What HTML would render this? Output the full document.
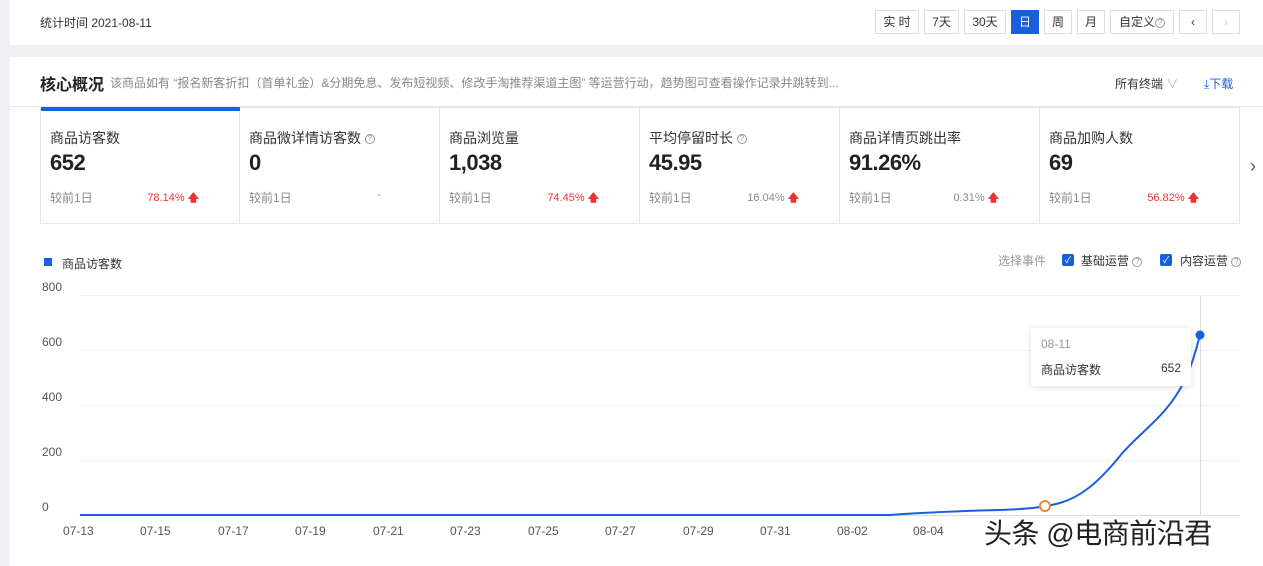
<!DOCTYPE html><html><head><meta charset="utf-8"><style>
*{margin:0;padding:0;box-sizing:border-box}
body{width:1263px;height:566px;background:#eef0f3;position:relative;overflow:hidden;font-family:"Liberation Sans","Noto Sans CJK SC",sans-serif;color:#333}
.a{position:absolute;white-space:nowrap}
.btn{position:absolute;top:10px;height:24px;border:1px solid #dcdfe4;background:#fff;font-size:12px;color:#333;text-align:center;line-height:22px}
.cell{position:absolute;top:107px;width:200px;height:117px;border:1px solid #e3e6ea;border-left:none;background:#fff}
.cell .t{position:absolute;left:9px;top:20px;font-size:14px;color:#333}
.cell .v{position:absolute;left:9px;top:42px;font-size:22px;font-weight:bold;color:#222;letter-spacing:-0.5px}
.cell .c{position:absolute;left:9px;top:81px;font-size:12px;color:#888}
.cell .p{position:absolute;right:40px;top:81px;font-size:11px;color:#e33}
.cell .g{color:#888}
.q{display:inline-block;width:10px;height:10px;border:1px solid #999;border-radius:50%;font-size:8px;line-height:8px;text-align:center;color:#999;vertical-align:middle}
.yl{position:absolute;left:42px;font-size:12px;color:#555}
.xl{position:absolute;top:524px;font-size:12px;color:#555}
</style></head><body>
<div class="a" style="left:10px;top:0;width:1253px;height:45px;background:#fff"></div>
<div class="a" style="left:40px;top:14px;font-size:12px;color:#333">统计时间 2021-08-11</div>
<div class="btn" style="left:875px;width:44px">实 时</div>
<div class="btn" style="left:924px;width:35px">7天</div>
<div class="btn" style="left:964px;width:42px">30天</div>
<div class="btn" style="left:1011px;width:28px;background:#1a5ee0;border-color:#1a5ee0;color:#fff">日</div>
<div class="btn" style="left:1044px;width:28px">周</div>
<div class="btn" style="left:1077px;width:28px">月</div>
<div class="btn" style="left:1110px;width:64px">自定义<span class="q">?</span></div>
<div class="btn" style="left:1179px;width:28px">‹</div>
<div class="btn" style="left:1212px;width:28px;color:#ccc">›</div>
<div class="a" style="left:10px;top:57px;width:1253px;height:509px;background:#fff"></div>
<div class="a" style="left:40px;top:71px;font-size:16px;font-weight:bold;color:#222">核心概况</div>
<div class="a" style="left:110px;top:74px;font-size:12px;color:#888">该商品如有 “报名新客折扣（首单礼金）&amp;分期免息、发布短视频、修改手淘推荐渠道主图” 等运营行动，趋势图可查看操作记录并跳转到...</div>
<div class="a" style="left:1115px;top:75px;font-size:12px;color:#333">所有终端 <span style="color:#bbb">∨</span></div>
<div class="a" style="left:1204px;top:75px;font-size:12px;color:#1a5ee0">⤓下载</div>
<div class="a" style="left:10px;top:106px;width:1253px;height:1px;background:#e6e8eb"></div>
<div class="cell" style="left:40px;border-left:1px solid #e3e6ea"><div class="a" style="left:0;top:-1px;width:200px;height:4px;background:#1a5ee0"></div><div class="t">商品访客数</div><div class="v">652</div><div class="c">较前1日</div><div class="p">78.14% <b>🡅</b></div></div>
<div class="cell" style="left:240px"><div class="t">商品微详情访客数 <span class="q">?</span></div><div class="v">0</div><div class="c">较前1日</div><div class="p g" style="right:58px">-</div></div>
<div class="cell" style="left:440px"><div class="t">商品浏览量</div><div class="v">1,038</div><div class="c">较前1日</div><div class="p">74.45% <b>🡅</b></div></div>
<div class="cell" style="left:640px"><div class="t">平均停留时长 <span class="q">?</span></div><div class="v">45.95</div><div class="c">较前1日</div><div class="p g">16.04% <b style="color:#e33">🡅</b></div></div>
<div class="cell" style="left:840px"><div class="t">商品详情页跳出率</div><div class="v">91.26%</div><div class="c">较前1日</div><div class="p g">0.31% <b style="color:#e33">🡅</b></div></div>
<div class="cell" style="left:1040px"><div class="t">商品加购人数</div><div class="v">69</div><div class="c">较前1日</div><div class="p">56.82% <b>🡅</b></div></div>
<div class="a" style="left:1250px;top:156px;font-size:18px;color:#555">›</div>
<div class="a" style="left:44px;top:258px;width:8px;height:8px;background:#1a5ee0"></div>
<div class="a" style="left:62px;top:255px;font-size:12px;color:#333">商品访客数</div>
<div class="a" style="left:998px;top:252px;font-size:12px;color:#999">选择事件</div>
<div class="a" style="left:1062px;top:254px;width:12px;height:12px;background:#1a5ee0;border-radius:2px;color:#fff;font-size:9px;line-height:12px;text-align:center">✓</div>
<div class="a" style="left:1081px;top:252px;font-size:12px;color:#333">基础运营 <span class="q">?</span></div>
<div class="a" style="left:1160px;top:254px;width:12px;height:12px;background:#1a5ee0;border-radius:2px;color:#fff;font-size:9px;line-height:12px;text-align:center">✓</div>
<div class="a" style="left:1180px;top:252px;font-size:12px;color:#333">内容运营 <span class="q">?</span></div>
<div class="yl" style="top:280px">800</div><div class="yl" style="top:335px">600</div><div class="yl" style="top:390px">400</div><div class="yl" style="top:445px">200</div><div class="yl" style="top:500px;left:42px">0</div>
<svg class="a" style="left:0;top:0" width="1263" height="566">
<g stroke="#eef0f2" stroke-width="1"><line x1="80" y1="295.5" x2="1240" y2="295.5"/><line x1="80" y1="350.5" x2="1240" y2="350.5"/><line x1="80" y1="405.5" x2="1240" y2="405.5"/><line x1="80" y1="460.5" x2="1240" y2="460.5"/></g>
<line x1="80" y1="515.5" x2="1240" y2="515.5" stroke="#ddd"/>
<line x1="1200.5" y1="296" x2="1200.5" y2="515" stroke="#ddd"/>
<path d="M80 515 L890 515 C930 512 960 511 1000 510 C1030 509 1045 507 1060 503 C1080 497 1095 485 1115 462 C1140 430 1165 420 1185 380 C1192 365 1196 350 1200 335" fill="none" stroke="#1a5ee0" stroke-width="2"/>
<circle cx="1200" cy="335" r="4.5" fill="#1a5ee0"/>
<circle cx="1045" cy="506" r="5" fill="#fff" stroke="#f0883a" stroke-width="2"/>
</svg>
<div class="a" style="left:1031px;top:328px;width:160px;height:58px;background:#fff;box-shadow:0 1px 6px rgba(0,0,0,.15)">
<div class="a" style="left:10px;top:9px;font-size:12px;color:#999">08-11</div>
<div class="a" style="left:10px;top:33px;font-size:12px;color:#333">商品访客数</div>
<div class="a" style="right:10px;top:33px;font-size:12px;color:#333">652</div></div>
<div class="xl" style="left:63px">07-13</div><div class="xl" style="left:140px">07-15</div><div class="xl" style="left:218px">07-17</div><div class="xl" style="left:295px">07-19</div><div class="xl" style="left:373px">07-21</div><div class="xl" style="left:450px">07-23</div><div class="xl" style="left:528px">07-25</div><div class="xl" style="left:605px">07-27</div><div class="xl" style="left:683px">07-29</div><div class="xl" style="left:760px">07-31</div><div class="xl" style="left:837px">08-02</div><div class="xl" style="left:913px">08-04</div>
<div class="a" style="left:984px;top:512px;font-size:28px;color:#222;letter-spacing:-0.5px;text-shadow:0 0 2px #fff,0 0 3px #fff">头条 @电商前沿君</div>
</body></html>
